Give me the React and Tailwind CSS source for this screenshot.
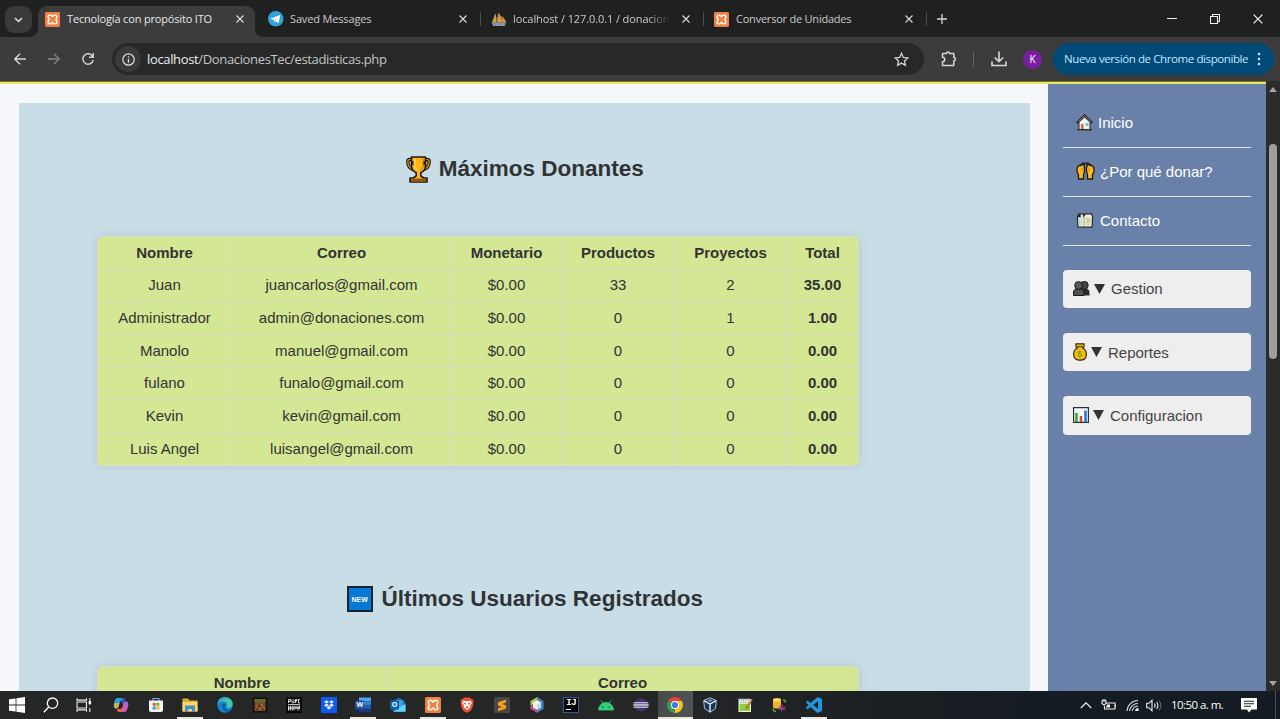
import React from "react";

const ui = "font-['Open_Sans','Noto_Sans',sans-serif]";

function Svg({ className = "size-4", box = "0 0 16 16", children, ...rest }) {
  return (
    <svg className={"block shrink-0 " + className} viewBox={box} fill="none" {...rest}>
      {children}
    </svg>
  );
}

/* ---------- application logos ---------- */

function Xampp({ className = "size-[15px]" }) {
  return (
    <Svg className={className}>
      <rect width="16" height="16" rx="1.5" fill="#ee8044" />
      <path
        d="M5 3.400h1.200L8 5l1.800-1.600H11c1.600 0 2 1.400 1.500 2.600L11.600 8l.9 2c.5 1.200.1 2.600-1.500 2.600H9.800L8 11l-1.800 1.600H5c-1.600 0-2-1.400-1.500-2.600L4.400 8l-.9-2C3 4.800 3.400 3.400 5 3.400z"
        stroke="#fff1e4"
        strokeWidth="1.700"
        strokeLinejoin="round"
      />
    </Svg>
  );
}

function Telegram() {
  return (
    <Svg className="size-[15.500px]">
      <circle cx="8" cy="8" r="8" fill="#2fa3dc" />
      <path d="M3 7.800l8.700-3.500c.6-.2 1 .1.800.9l-1.400 6.500c-.1.600-.6.700-1.100.400L7.900 10.500l-1.100 1.100c-.2.200-.4.200-.4-.1l-.4-2.300-2.800-.9c-.5-.2-.5-.4-.2-.5z" fill="#fff" />
      <path d="M6.200 9.200l4.500-3.200-3.500 3.700-.4 1.600z" fill="#a9d3ea" />
    </Svg>
  );
}

function PhpMyAdmin() {
  return (
    <Svg className="size-4">
      <path d="M1 11.500C3 8 4 5 4 2.500c1.500 2.500 1.800 6 1.300 9zM6 11.500c1.500-4 1.800-7.500 1.400-10 2.400 2.800 3.600 6.500 3.800 10zM12 11.500c0-2.800-.5-4.600-1.500-6.500 2.500 1.500 4 4 4.500 6.500z" fill="#f29a24" />
      <path d="M4.300 3.500L1.300 11.500M7.500 2.500L6 11.500M10.800 5.500l1 6" stroke="#8d94a5" strokeWidth="1" />
      <path d="M.5 11h15l-1.500 4H2z" fill="#7c8192" />
      <path d="M3 12v3M6 12v3M9 12v3M12 12v3" stroke="#c2c3cc" strokeWidth=".8" />
    </Svg>
  );
}

function Windows() {
  return (
    <Svg className="size-[16px]">
      <path d="M0 2.300l6.600-.9v6.200H0zM7.400 1.300L16 .1v7.500H7.400zM0 8.400h6.600v6.200L0 13.700zM7.400 8.400H16v7.500l-8.600-1.200z" fill="#fff" />
    </Svg>
  );
}
function Search() {
  return (
    <Svg>
      <circle cx="9.500" cy="6.200" r="5.200" stroke="#fff" strokeWidth="1.300" />
      <path d="M5.800 10L.8 15.300" stroke="#fff" strokeWidth="1.400" />
    </Svg>
  );
}
function TaskView() {
  return (
    <Svg>
      <path d="M1 1.300v1.800h9.500V1.300M1 14.700v-1.800h9.500v1.800M1 5h9.500v6H1zM13.800 1v7M13.800 11v4" stroke="#eee" strokeWidth="1.100" />
      <rect x="12.600" y="4" width="2.500" height="3" fill="#fff" />
    </Svg>
  );
}
function Copilot() {
  return (
    <Svg>
      <path d="M4.500 1h5c1.200 0 1.800.7 2.100 1.700L12 4H8.500C6.800 4 6.500 6 6 8c-.5 2-1 3.500-3 3.500C.5 11.500.5 8.500 1 6.500 1.500 4 2.300 1 4.500 1z" fill="#2a9ee0" />
      <path d="M1.500 6c-.5 3-.5 5.500 1.500 5.500 1.700 0 2.400-1.200 2.800-3L6.500 6z" fill="#d8b33a" />
      <path d="M11.500 15h-5c-1.200 0-1.800-.7-2.100-1.700L4 12h3.500C9.200 12 9.500 10 10 8c.5-2 1-3.500 3-3.500 2.500 0 2.500 3 2 5-.5 2.500-1.300 5.500-3.500 5.500z" fill="#d85aa6" />
      <path d="M4 12h3.500c1 0 1.500-.7 1.900-2l-1 5H6.500c-1.200 0-1.800-.7-2.100-1.700z" fill="#e8683b" />
      <path d="M9 1c1.500 0 2.300.7 2.600 1.700l.6 1.800c-1.500.3-2 2-2.400 3.500L8.300 4z" fill="#3157c8" />
      <path d="M13 4.500c2.500 0 2.500 3 2 5l-5-1.500c.5-2 1-3.500 3-3.500z" fill="#9c6cdc" />
    </Svg>
  );
}
function Store() {
  return (
    <Svg>
      <path d="M5 4V1.500h6V4" stroke="#5bb3e8" strokeWidth="1.200" />
      <path d="M1 3.500h14V13a2 2 0 0 1-2 2H3a2 2 0 0 1-2-2z" fill="#f4f4f4" />
      <path d="M4.700 5.800h3v3h-3z" fill="#e8562b" />
      <path d="M8.400 5.800h3v3h-3z" fill="#76b82a" />
      <path d="M4.700 9.500h3v3h-3z" fill="#2b9de0" />
      <path d="M8.400 9.500h3v3h-3z" fill="#f5b921" />
    </Svg>
  );
}
function Explorer() {
  return (
    <Svg>
      <path d="M.5 1.500h5.500l1.500 2h8v11H.5z" fill="#e8a92c" />
      <path d="M.5 5h15v9.500H.5z" fill="#fbd668" />
      <path d="M3 8.500h10v6.300h-3V12H6v2.800H3z" fill="#4390d2" />
    </Svg>
  );
}
function Edge() {
  return (
    <Svg>
      <circle cx="8" cy="8" r="7.700" fill="#1684cf" />
      <path d="M.5 7C1 3 4 .3 8 .3c4.500 0 7.700 3.200 7.700 6.500 0 2.400-1.700 4-4 4-1.500 0-2.200-.6-2.200-1.200 0-.5.6-.8.6-2C10.100 5.800 8.300 4.500 6 4.500 3.500 4.500 1.500 5.500.5 7z" fill="#48c9a4" />
      <path d="M.5 7C1 3 4 .3 8 .3c2 0 3.500.5 4.800 1.500C9 1 5 3 4 4.900 2.500 5.200 1.200 6 .5 7z" fill="#27a9d8" />
      <path d="M5.500 8c-1 4 2 6.500 5.500 6.500 1.400 0 2.500-.5 3.200-1.200-4 1-6.700-1.300-6.700-3.800 0-1 .4-1.800 1-2.300C7.500 6.300 6 6.500 5.500 8z" fill="#0b4f94" />
    </Svg>
  );
}
function Minecraft() {
  return (
    <Svg>
      <path d="M.5.500h15v15H.5z" fill="#17110d" />
      <path d="M2.500 2h11v12h-11z" fill="#7d4a2a" />
      <path d="M2.500 2h11v3h-2v1h-2V5h-2v2h-2V5h-3z" fill="#5e6e2d" />
      <path d="M4 8h2v2H4zM9 7h2v2H9zM7 11h2v2H7zM11 10h2v2h-2z" fill="#a15d35" />
      <path d="M4 12h2v1H4zM6 8h2v2H6zM10 12h2v1h-2z" fill="#4d2d1b" />
    </Svg>
  );
}
function Pubg() {
  return (
    <Svg>
      <path d="M0 0h16v16H0z" fill="#080808" />
      <path d="M2.500 6V2.500h2v2h-2M6 2.500v3.200h2V2.500M9.500 6V2.500h1.500v1.400H9.500M14 2.500h-1.500V6H14" stroke="#eee" strokeWidth=".9" />
      <path d="M2 7.700h12M2.500 9v4.500M4.300 9v4.500M6.200 9v4.500M8 9v4.500M10 9v3M12 9v4.500M13.500 9v3M2.500 11h11" stroke="#e5e5e5" strokeWidth="1" />
    </Svg>
  );
}
function Dropbox() {
  return (
    <Svg>
      <path d="M0 0h16v16H0z" fill="#0c5cf3" />
      <path d="M5.500 3.200L8 4.900 5.500 6.600 3 4.900zM10.500 3.200L13 4.900l-2.500 1.700L8 4.900zM3 8.300l2.500-1.700L8 8.300 5.500 10zM8 8.300l2.500-1.700L13 8.300 10.500 10zM5.500 10.700L8 9l2.500 1.700L8 12.400z" fill="#e8f3ff" />
    </Svg>
  );
}
function OfficeTile({ letter, outlook }) {
  return (
    <span className="relative block size-4">
      <Svg className="size-4">
        {outlook ? (
          <>
            <path d="M3 4l6-3.500L15.500 5v9.500H3z" fill="#1670b8" />
            <path d="M6 3h7v8H6z" fill="#34a6e4" />
            <path d="M3 14.800l12.500-8v8z" fill="#66d5f5" />
          </>
        ) : (
          <>
            <path d="M4 .5h12v4H4z" fill="#47a8ee" />
            <path d="M4 4.500h12v3.600H4z" fill="#2f7fd6" />
            <path d="M4 8.100h12v3.600H4z" fill="#235fae" />
            <path d="M4 11.700h12v3.500H4z" fill="#163d83" />
          </>
        )}
        <rect x="0" y="3.500" width="9" height="9" rx=".8" fill={outlook ? "#0f5fae" : "#1c4e9e"} />
      </Svg>
      <span className="absolute left-0 top-[4px] w-[9px] text-center text-[7px] font-bold leading-[8px] text-white">{letter}</span>
    </span>
  );
}
function Brave() {
  return (
    <Svg>
      <path d="M5 .6h6l1.300 1.500h1.400l1 2.300-.5 1.300.3 1-1.700 5.500c-.5 1.500-3.500 3-4.800 3.600-1.300-.6-4.300-2.100-4.800-3.600L1.500 6.700l.3-1-.5-1.300 1-2.300h1.400z" fill="#ee4d2f" />
      <path d="M4.500 3.500L6 4h4l1.500-.5L13 6l-2 2.500.5 1.500L8 13l-3.500-3L5 8.500 3 6z" fill="#fff" />
      <path d="M4 5.500l3 .7L6.300 8zM12 5.500l-3 .7.700 1.800zM8 8.500v1M6 10l2-.8 2 .8-2 1.500z" fill="#ee4d2f" />
    </Svg>
  );
}
function Sublime() {
  return (
    <Svg>
      <rect width="16" height="16" rx="1.500" fill="#474747" />
      <path d="M12 2.600v3L8.300 6.900 12 8.300v3.200l-8 2.700v-3l3.700-1.300L4 8.500V5.300z" fill="#f99a18" />
    </Svg>
  );
}
function NetBeans() {
  return (
    <Svg>
      <path d="M8 .3l3.500 2L8 7z" fill="#a9cf5d" />
      <path d="M8 .3L1.500 4v4L8 7z" fill="#b4c85a" />
      <path d="M1.500 8v4L8 15.800V9z" fill="#c34f7a" />
      <path d="M8 .3L14.500 4v8L8 15.800V8z" fill="#3d87bf" />
      <path d="M8 3.300L12 5.500v5L8 12.800l-4-2.300v-5z" fill="#f2f2f5" />
      <path d="M8 7.800l4-2.300v5L8 12.800z" fill="#c9d6de" />
    </Svg>
  );
}
function IntelliJ() {
  return (
    <span className="relative block size-4 border border-[#285ba0] bg-black">
      <span className="absolute left-[2px] top-[0px] font-['Liberation_Mono',monospace] text-[9px] font-bold leading-[10px] tracking-[-0.5px] text-white">IJ</span>
      <span className="absolute bottom-[2px] left-[2px] h-px w-[5px] bg-white" />
    </span>
  );
}
function Android() {
  return (
    <Svg>
      <path d="M.5 13a7.500 7.500 0 0 1 15 0zM3 3.500l2 3M13 3.500l-2 3" fill="#35d07b" stroke="#35d07b" strokeWidth=".8" />
      <circle cx="4.700" cy="10" r=".8" fill="#1c3526" />
      <circle cx="11.300" cy="10" r=".8" fill="#1c3526" />
    </Svg>
  );
}
function Eclipse() {
  return (
    <Svg>
      <circle cx="8" cy="8" r="6.500" fill="#44336f" />
      <path d="M.8 5.500h14.400M.8 10.500h14.400" stroke="#b9b1d3" strokeWidth="1" />
      <path d="M.3 7.200h15.400M.3 8.900h15.400" stroke="#fff" strokeWidth=".9" />
    </Svg>
  );
}
function Chrome() {
  return (
    <Svg>
      <path d="M8 8L1.200 4.100A7.800 7.800 0 0 1 14.800 4.100z" fill="#e54335" />
      <path d="M8 8V4.100h6.800A7.800 7.800 0 0 1 8 15.800z" fill="#fbc116" />
      <path d="M8 8l-.8 7.750A7.800 7.800 0 0 1 1.200 4.100z" fill="#34a350" />
      <path d="M11.300 9.800L8 15.800l-1-.1 3-5.500z" fill="#fbc116" />
      <circle cx="8" cy="8" r="4" fill="#fff" />
      <circle cx="8" cy="8" r="3.100" fill="#3c7de8" />
    </Svg>
  );
}
function VirtualBox() {
  return (
    <Svg>
      <path d="M8 .8l6.300 2.700-.8 8L8 15.300l-5.500-3.800-.8-8z" fill="#1c3553" stroke="#bdd3e8" strokeWidth=".9" />
      <path d="M2 3.700L8 7l6-3.300M8 7v8" stroke="#e4eff8" strokeWidth="1.400" />
      <path d="M8 2.200l2.800 1.300L8 5 5.200 3.500z" fill="#6e98c2" />
    </Svg>
  );
}
function Notepad() {
  return (
    <Svg>
      <path d="M1.500 2h12.500v13H1.500z" fill="#f0f3e4" />
      <path d="M2.500 7h10.500v7H2.500z" fill="#90cf3b" />
      <path d="M2 1v3M4.300 1v3M6.600 1v3M8.900 1v3M11.200 1v3" stroke="#8b9099" strokeWidth=".9" />
      <path d="M3 5.700h8" stroke="#96b56d" strokeWidth=".8" />
      <path d="M14.500 2l1 1-5 8-1.500.7.200-1.700z" fill="#dd9638" stroke="#60482a" strokeWidth=".5" />
    </Svg>
  );
}
function DbTool() {
  return (
    <Svg>
      <path d="M2 2.500v7.500c0 2 8 2 8 0V2.500z" fill="#f0b62b" />
      <ellipse cx="6" cy="2.700" rx="4" ry="1.800" fill="#ffdc62" />
      <path d="M12 3c2 0 2.500 1 2.500 2.500M2 11.500c0 2 1 3 3 3" stroke="#5da93d" strokeWidth="1.300" />
      <path d="M8 9l6 4M11.500 7.500l-1 7M7.500 12.500l7-2" stroke="#a33e9b" strokeWidth="1.300" />
    </Svg>
  );
}
function VsCode() {
  return (
    <Svg box="0 0 24 24">
      <path d="M23.150 2.587L18.210.210a1.494 1.494 0 0 0-1.705.290l-9.460 8.630-4.120-3.128a.999.999 0 0 0-1.276.057L.327 7.261A1 1 0 0 0 .326 8.740L3.899 12 .326 15.260a1 1 0 0 0 .001 1.479L1.650 17.940a.999.999 0 0 0 1.276.057l4.120-3.128 9.460 8.630a1.492 1.492 0 0 0 1.704.290l4.942-2.377A1.500 1.500 0 0 0 24 20.060V3.939a1.500 1.500 0 0 0-.850-1.352zm-5.146 14.861L10.826 12l7.178-5.448v10.896z" fill="#2295dc" />
    </Svg>
  );
}

/* ---------- emoji drawings ---------- */

function Trophy() {
  return (
    <Svg className="h-[27px] w-[25px]" box="0 0 25 27">
      <path d="M7 3.500H4C2.500 3.500 1.800 4.300 1.800 5.500 1.800 9.500 4 12.500 7.500 13.500M18 3.500h3c1.500 0 2.200.8 2.200 2 0 4-2.200 7-5.700 8" stroke="#201710" strokeWidth="3.400" />
      <path d="M7 3.500H4C2.500 3.500 1.800 4.300 1.800 5.500 1.800 9.500 4 12.500 7.500 13.500M18 3.500h3c1.500 0 2.200.8 2.200 2 0 4-2.200 7-5.700 8" stroke="#e79a1b" strokeWidth="1.200" />
      <path d="M5.500 1h14v9c0 3.500-2 5.500-4.700 6.800v3l3 2.200h3.200v4H4v-4h3.200l3-2.200v-3C7.500 15.500 5.500 13.500 5.500 10z" fill="#fcb512" stroke="#201710" strokeWidth="1.600" strokeLinejoin="round" />
      <path d="M5 22.500h15v3H5z" fill="#96541d" />
      <path d="M9 3v7c0 2 .8 3 2 4" stroke="#ffd75c" strokeWidth="1.500" />
      <path d="M17.300 2v8c0 2-1 3.500-2.500 5" stroke="#df8d10" strokeWidth="1.500" />
      <path d="M6.800 5v4M18.200 5v4" stroke="#201710" strokeWidth="1.300" />
    </Svg>
  );
}
function NewBadge() {
  return (
    <span className="flex size-[26px] shrink-0 items-center justify-center border-2 border-[#14222d] bg-[#0878d6] text-[7px] font-bold leading-none text-white">
      NEW
    </span>
  );
}
function House() {
  return (
    <Svg className="size-[17px]" box="0 0 17 17">
      <path d="M3 8l5.500-5L14 8v7.500H3z" fill="#f5f4f0" stroke="#28211d" strokeWidth="1" />
      <path d="M.8 9L8.500 1.500 16.200 9" stroke="#211b19" strokeWidth="2.200" />
      <path d="M2 8l6.500-6L15 8" stroke="#a9a3a0" strokeWidth=".8" />
      <path d="M5 10h2.500v5H5z" fill="#d8643a" />
      <path d="M9.500 9h3v3h-3z" fill="#5cc7ee" />
      <path d="M1 15.700h15" stroke="#2b3a2b" strokeWidth="1.500" />
    </Svg>
  );
}
function Hands() {
  return (
    <Svg className="h-[18px] w-[19px]" box="0 0 19 18">
      <path d="M7.500 1.200L2.300 4C1 5.500.8 8 1.200 10l1.300 3v4h5v-4.500l1-3V6zM11.500 1.200L16.700 4c1.300 1.500 1.500 4 1.100 6l-1.300 3v4h-5v-4.500l-1-3V6z" fill="#f9b724" stroke="#231b10" strokeWidth="1.300" />
      <path d="M3.500 4L8 1.500M6 .8l2.300 2.500M15.500 4L11 1.500M13 .8l-2.300 2.500M7.500 1.300h4" stroke="#2a2012" strokeWidth="1.600" />
      <path d="M6 6v3M13 6v3" stroke="#d58a17" />
    </Svg>
  );
}
function NoteBook() {
  return (
    <Svg className="h-[17px] w-[18px]" box="0 0 19 17">
      <path d="M1.500 5L3 1.500h5V4l2-2.500h6.500l1 3-.5 11H2z" fill="#e9efdc" stroke="#252a2a" strokeWidth="1.300" />
      <path d="M8.500 3.500v11" stroke="#8ba09a" />
      <path d="M4 5v8M6 5v8" stroke="#b9cbbb" />
      <path d="M10.500 6.500H15M10.500 8.500H15M10.500 10.500H15M11 12.500h3" stroke="#c6bc61" strokeWidth="1.100" />
      <path d="M2 2h3v3H2z" fill="#1b2424" />
    </Svg>
  );
}
function People() {
  return (
    <Svg className="h-[15px] w-[17px]" box="0 0 17 15">
      <path d="M6 14.500V11c0-2.500 2-3.500 5.500-3.500s5 1.500 5 4v3z" fill="#2a2a2a" />
      <circle cx="11.300" cy="4.300" r="4" fill="#444" stroke="#111" strokeWidth=".7" />
      <path d="M.5 14.500V11c0-2.200 2-3.200 5-3.200s5.500 1 5.500 3.200v3.500z" fill="#515151" stroke="#171717" />
      <circle cx="5.600" cy="4.500" r="3.900" fill="#5a5a5a" stroke="#171717" />
    </Svg>
  );
}
function MoneyBag() {
  return (
    <span className="relative block h-[18px] w-[14px]">
      <Svg className="h-[18px] w-[14px]" box="0 0 14 18">
        <path d="M3 .8h8v2.700l-1.200 1.800C12.200 6.300 13.400 8.700 13.400 11.500c0 3.700-2.500 5.700-6.400 5.700S.6 15.200.6 11.500c0-2.800 1.200-5.200 3.600-6.200L3 3.500z" fill="#f6c010" stroke="#352916" strokeWidth="1.200" />
        <path d="M3.500 3.700h7" stroke="#6a4814" strokeWidth="1.300" />
      </Svg>
      <span className="absolute left-0 top-[6.500px] w-[14px] text-center text-[9px] font-bold leading-[9px] text-[#7f9d1b]">$</span>
    </span>
  );
}
function BarChart() {
  return (
    <Svg>
      <path d="M.6.600h14.800v14.800H.6z" fill="#f8fafa" stroke="#263238" strokeWidth="1.200" />
      <path d="M2.200 6h2.600v9H2.200z" fill="#3ba53b" />
      <path d="M6.700 9h2.600v6H6.700z" fill="#d94b36" />
      <path d="M11.200 3.500h2.600V15h-2.600z" fill="#2c78d6" />
    </Svg>
  );
}

/* ---------- browser ---------- */

function Cross({ className = "size-[8px]", color = "#dcdedf" }) {
  return (
    <Svg className={className} box="0 0 8 8">
      <path d="M.5.500l7 7M7.500.500l-7 7" stroke={color} strokeWidth="1.100" />
    </Svg>
  );
}

function Tab({ icon, title, titleClass = "", active, faded, divider }) {
  return (
    <div className="flex h-full w-[223px] shrink-0">
      <div className={"relative flex h-full w-[217px] items-center rounded-t-[9px] pb-[5px] pl-[7px] " + (active ? "bg-[#3c3c3c]" : "")}>
        {active && (
          <>
            <Svg className="absolute bottom-0 -left-[8px] size-[8px]" box="0 0 8 8"><path d="M8 0v8H0a8 8 0 0 0 8-8z" fill="#3c3c3c" /></Svg>
            <Svg className="absolute bottom-0 -right-[8px] size-[8px]" box="0 0 8 8"><path d="M0 0v8h8a8 8 0 0 1-8-8z" fill="#3c3c3c" /></Svg>
          </>
        )}
        <div className="flex w-[15.500px] justify-center">{icon}</div>
        <div className={"ml-[6.500px] w-[155.500px] whitespace-nowrap text-[11px] leading-[16px] " + (active ? "text-[#e6e7e8] " : "text-[#c8cbcc] ") + (faded ? "[mask-image:linear-gradient(to_right,black_135px,transparent_157px)] " : "") + titleClass}>
          {title}
        </div>
        <div className="ml-[13.500px]"><Cross /></div>
      </div>
      {divider && <div className="ml-[2px] mt-[6px] h-[14px] w-px bg-[#4b4d4d]" />}
    </div>
  );
}

function TabStrip() {
  return (
    <div className="flex h-[37px] bg-[#1f2020]">
      <div className="ml-[5px] mt-[6px] flex size-[27px] shrink-0 items-center justify-center rounded-[9px] bg-[#393a3a]">
        <Svg className="h-[6px] w-[9px]" box="0 0 9 6"><path d="M1 1l3.500 3.500L8 1" stroke="#e4e5e5" strokeWidth="1.500" /></Svg>
      </div>
      <div className="ml-[6px] mt-[6px] flex">
        <Tab active icon={<Xampp />} title="Tecnología con propósito ITO" titleClass="tracking-[-0.17px]" />
        <Tab divider icon={<Telegram />} title="Saved Messages" titleClass="tracking-[-0.15px]" />
        <Tab divider faded icon={<PhpMyAdmin />} title="localhost / 127.0.0.1 / donacion" titleClass="tracking-[-0.1px]" />
        <Tab divider icon={<Xampp />} title="Conversor de Unidades" titleClass="tracking-[-0.22px]" />
      </div>
      <div className="ml-[7px] flex items-center">
        <Svg className="size-[10px]" box="0 0 10 10"><path d="M5 0v10M0 5h10" stroke="#d4d6d6" strokeWidth="1.300" /></Svg>
      </div>
      <div className="ml-auto flex w-[130px] items-center justify-around">
        <Svg className="size-[10px]" box="0 0 10 10"><path d="M0 4.500h10" stroke="#eee" /></Svg>
        <Svg className="size-[10px]" box="0 0 10 10"><path d="M.5 2.500h7v7h-7zM2.500 2.500V.500h7v7h-2" stroke="#eee" strokeWidth="1.100" /></Svg>
        <Cross className="size-[10px]" color="#eee" />
      </div>
    </div>
  );
}

function Toolbar() {
  return (
    <div className="flex h-[44px] items-center bg-[#3c3c3c] pl-[14px]">
      <div className="flex w-[98px] shrink-0 gap-[22px]">
        <Svg className="size-[12px]" box="0 0 12 12"><path d="M12 6H1M6 .800L.8 6 6 11.200" stroke="#d4d5d5" strokeWidth="1.400" /></Svg>
        <Svg className="size-[12px]" box="0 0 12 12"><path d="M0 6h11M6 .800L11.200 6 6 11.200" stroke="#858686" strokeWidth="1.300" /></Svg>
        <Svg className="size-[12px]" box="0 0 12 12"><path d="M10.500 3.200A5.200 5.200 0 1 0 11.200 7M11.200 0v4.200H7" stroke="#d4d5d5" strokeWidth="1.400" /></Svg>
      </div>
      <div className="flex h-[32px] w-[812px] shrink-0 items-center rounded-full bg-[#282828] pl-[3px] pr-[15px]">
        <div className="flex size-[26px] items-center justify-center rounded-full bg-[#3a3a3a]">
          <Svg className="size-[13px]" box="0 0 13 13">
            <circle cx="6.500" cy="6.500" r="5.700" stroke="#dcdddd" strokeWidth="1.200" />
            <path d="M6.500 5.700v4M6.500 3.200v1.400" stroke="#dcdddd" strokeWidth="1.300" />
          </Svg>
        </div>
        <div className="ml-[6px] whitespace-nowrap text-[13px] leading-[20px] tracking-[-0.35px] text-[#c3c5c6]">
          <span className="text-[#ecedee]">localhost</span>/DonacionesTec/estadisticas.php
        </div>
        <Svg className="ml-auto size-[15px]" box="0 0 15 15">
          <path d="M7.500 1.300l1.900 4.100 4.400.500-3.300 3 .9 4.400-3.900-2.200-3.900 2.200.9-4.400-3.300-3 4.400-.500z" stroke="#d4d5d5" strokeWidth="1.300" />
        </Svg>
      </div>
      <Svg className="ml-[17px] h-[16px] w-[16px]">
        <path d="M1.500 2.500h4a1.500 1.500 0 0 1 3 0h4.300v4a1.600 1.600 0 0 1 0 3.200v4.800H1.500v-3.700a2.200 2.200 0 0 0 0-4.500z" stroke="#d4d5d5" strokeWidth="1.500" strokeLinejoin="round" />
      </Svg>
      <div className="ml-[16px] h-[15px] w-px bg-[#636464]" />
      <Svg className="ml-[17px] size-4"><path d="M8 .500v10M3.800 6.500L8 10.700l4.200-4.200M1 10.500v4h14v-4" stroke="#d8d9d9" strokeWidth="1.600" /></Svg>
      <div className="ml-[16px] flex size-[19px] shrink-0 items-center justify-center rounded-full bg-[#7b1fa2] text-[10px] leading-none text-white">K</div>
      <div className="ml-[11px] flex h-[32px] w-[221px] shrink-0 items-center rounded-full bg-[#004a77] pl-[11px]">
        <span className="w-[184px] whitespace-nowrap text-[11.500px] leading-[16px] tracking-[-0.4px] text-[#c2e7ff]">Nueva versión de Chrome disponible</span>
        <Svg className="ml-[9px] h-[14px] w-[4px]" box="0 0 4 14">
          <circle cx="2" cy="2" r="1.300" fill="#c2e7ff" /><circle cx="2" cy="7" r="1.300" fill="#c2e7ff" /><circle cx="2" cy="12" r="1.300" fill="#c2e7ff" />
        </Svg>
      </div>
    </div>
  );
}

/* ---------- page ---------- */

const donors = [
  ["Juan", "juancarlos@gmail.com", "$0.00", "33", "2", "35.00"],
  ["Administrador", "admin@donaciones.com", "$0.00", "0", "1", "1.00"],
  ["Manolo", "manuel@gmail.com", "$0.00", "0", "0", "0.00"],
  ["fulano", "funalo@gmail.com", "$0.00", "0", "0", "0.00"],
  ["Kevin", "kevin@gmail.com", "$0.00", "0", "0", "0.00"],
  ["Luis Angel", "luisangel@gmail.com", "$0.00", "0", "0", "0.00"],
];

function Cell({ bold, children }) {
  return (
    <div className={"flex items-center justify-center border-b border-r border-[#dadfc0] pb-px text-[15px] leading-none text-[#333333] " + (bold ? "font-bold" : "")}>
      {children}
    </div>
  );
}

const tableBox = "ml-[78px] w-[762px] overflow-hidden rounded-[6px] border-l border-t border-[#dadfc0] bg-[#d3e794] shadow-[0_0_8px_rgba(0,0,0,0.1)] ";

function MainPanel() {
  return (
    <main className="flex-1 bg-[#f5f7fb] pl-[19px] pr-[18.500px] pt-[19px]">
      <div className="h-[700px] bg-[#c9dde6] pt-[52px]">
        <h2 className="flex h-[28px] items-center justify-center gap-[8px] pl-px text-[22.500px] font-bold leading-none text-[#2f3336]">
          <Trophy /> <span className="pt-px">Máximos Donantes</span>
        </h2>
        <div className={tableBox + "mt-[53px] grid grid-cols-[134px_220px_110px_113px_112px_72px] grid-rows-[32px_33px_33px_32px_33px_33px_33px]"}>
          {["Nombre", "Correo", "Monetario", "Productos", "Proyectos", "Total"].map((h) => <Cell key={h} bold>{h}</Cell>)}
          {donors.map((row) => row.map((v, i) => <Cell key={row[0] + i} bold={i === 5}>{v}</Cell>))}
        </div>
        <h2 className="mt-[119px] flex h-[28px] items-center justify-center gap-[9px] pl-px text-[22.500px] font-bold leading-none text-[#2f3336]">
          <NewBadge /> Últimos Usuarios Registrados
        </h2>
        <div className={tableBox + "mt-[53px] grid auto-rows-[32px] grid-cols-[289px_472px]"}>
          <Cell bold>Nombre</Cell>
          <Cell bold>Correo</Cell>
        </div>
      </div>
    </main>
  );
}

function Sidebar() {
  return (
    <aside className="w-[218px] shrink-0 bg-[#6981a9] pl-[15px] pr-[15px] pt-[15px] text-[15px] leading-none">
      {[
        [<House />, "Inicio", "gap-[5px]"],
        [<Hands />, "¿Por qué donar?", "gap-[5px]"],
        [<NoteBook />, "Contacto", "gap-[6px]"],
      ].map(([icon, label, gap]) => (
        <a key={label} className={"flex h-[49px] items-center border-b border-[#dfe5ee] pb-[2px] pl-[13px] text-white " + gap}>
          {icon}<span>{label}</span>
        </a>
      ))}
      <div className="mt-[23.500px] flex flex-col gap-[24.500px]">
        {[
          [<People />, "Gestion"],
          [<MoneyBag />, "Reportes"],
          [<BarChart />, "Configuracion"],
        ].map(([icon, label]) => (
          <div key={label} className="flex h-[38.700px] items-center rounded-[4px] bg-[#eeeeee] pl-[9.500px] text-[#444444]">
            {icon}
            <Svg className="ml-[4px] h-[10px] w-[11px]" box="0 0 11 10"><path d="M0 0h11L5.500 10z" fill="#333" /></Svg>
            <span className="ml-[6.500px]">{label}</span>
          </div>
        ))}
      </div>
    </aside>
  );
}

function Scrollbar() {
  return (
    <div className="flex w-[14px] shrink-0 flex-col items-center bg-[#2b2b2c] pb-[5px] pt-[6px]">
      <Svg className="h-[5px] w-[8px]" box="0 0 8 5"><path d="M4 0l4 5H0z" fill="#a5a5a5" /></Svg>
      <div className="mt-[52px] h-[215px] w-[8px] rounded-full bg-[#9f9f9f]" />
      <Svg className="mt-auto h-[5px] w-[8px]" box="0 0 8 5"><path d="M0 0h8L4 5z" fill="#a5a5a5" /></Svg>
    </div>
  );
}

/* ---------- taskbar ---------- */

const apps = [
  [<Copilot />], [<Store />], [<Explorer />, true], [<Edge />], [<Minecraft />], [<Pubg />], [<Dropbox />],
  [<OfficeTile letter="W" />, true], [<OfficeTile letter="O" outlook />], [<Xampp className="size-4" />, true],
  [<Brave />], [<Sublime />], [<NetBeans />], [<IntelliJ />], [<Android />], [<Eclipse />], [<Chrome />, true, true],
  [<VirtualBox />], [<Notepad />], [<DbTool />], [<VsCode />, true],
];

function Taskbar() {
  return (
    <div className={"flex h-[28px] bg-linear-to-r from-[#252626] from-50% to-[#141b23] to-85% " + ui}>
      <div className="flex w-[103.700px] shrink-0 items-center gap-[17.500px] pl-[9px]"><Windows /><Search /><TaskView /></div>
      {apps.map(([icon, running, current], i) => (
        <div key={i} className={"flex w-[34.650px] shrink-0 flex-col items-center " + (current ? "bg-linear-to-r from-[#484b4c] to-[#505354]" : "")}>
          <div className="flex h-[26px] items-center pt-[2px]">{icon}</div>
          {running && <div className={"h-[2px] bg-[#e5e5dc] " + (current ? "w-full" : "w-[26px]")} />}
        </div>
      ))}
      <div className="ml-auto flex items-center text-white">
        <Svg className="h-[7px] w-[12px]" box="0 0 12 7"><path d="M.800 6L6 .800 11.200 6" stroke="#eee" strokeWidth="1.200" /></Svg>
        <Svg className="ml-[9px] h-[14px] w-[15px]" box="0 0 15 14">
          <path d="M5.500 5H14v6H3.500V8M1 3h4v2.500L3 7 1 5.500zM2 1v2M4 1v2M14.800 7v2" stroke="#eee" strokeWidth="1.100" />
          <path d="M6 6.500h3v3H5z" fill="#eee" />
        </Svg>
        <Svg className="ml-[10px] h-[13px] w-[13px]" box="0 0 13 13">
          <path d="M1 12A11 11 0 0 1 12 1.500M3.500 12A8.500 8.500 0 0 1 12 4.500M6.200 12A6 6 0 0 1 12 7.300" stroke="#d5d8da" strokeWidth="1.100" />
          <path d="M9 12a3.500 3.500 0 0 1 3.500-3v3z" fill="#eee" />
        </Svg>
        <Svg className="ml-[7px] h-[13px] w-[16px]" box="0 0 16 13">
          <path d="M.700 4.300H3L6 1.200v10.600L3 8.700H.700zM8.300 4.500c1 1.200 1 2.800 0 4M10.500 3c1.700 2 1.700 5 0 7" stroke="#eee" strokeWidth="1.100" />
          <path d="M12.800 1.500c2.600 3 2.600 7 0 10" stroke="#737980" />
        </Svg>
        <span className="ml-[9px] w-[52px] whitespace-nowrap text-[11.500px] leading-none tracking-[-0.55px]">10:50 a. m.</span>
        <Svg className="ml-[18px] size-4"><path d="M0 1h16v11.500h-5.500L8 15.500l-2-3H0z" fill="#fff" /><path d="M3 4.300h10M3 6.800h10M3 9.300h7" stroke="#18212a" strokeWidth="1.100" /></Svg>
        <div className="ml-[17.500px] mr-[4.500px] h-[28px] w-px bg-[#4b5259]" />
      </div>
    </div>
  );
}

export default function App() {
  return (
    <div className="flex h-[719px] w-[1280px] flex-col overflow-hidden">
      <header className={"shrink-0 " + ui}>
        <TabStrip />
        <Toolbar />
      </header>
      <div className="flex h-[610px] shrink-0 font-['Liberation_Sans',Arial,sans-serif]">
        <div className="flex flex-1 flex-col overflow-hidden">
          <div className="h-[3px] shrink-0 border-t border-[#77722a] bg-[#e9e85c]" />
          <div className="flex min-h-0 flex-1 overflow-hidden">
            <MainPanel />
            <Sidebar />
          </div>
        </div>
        <Scrollbar />
      </div>
      <Taskbar />
    </div>
  );
}
